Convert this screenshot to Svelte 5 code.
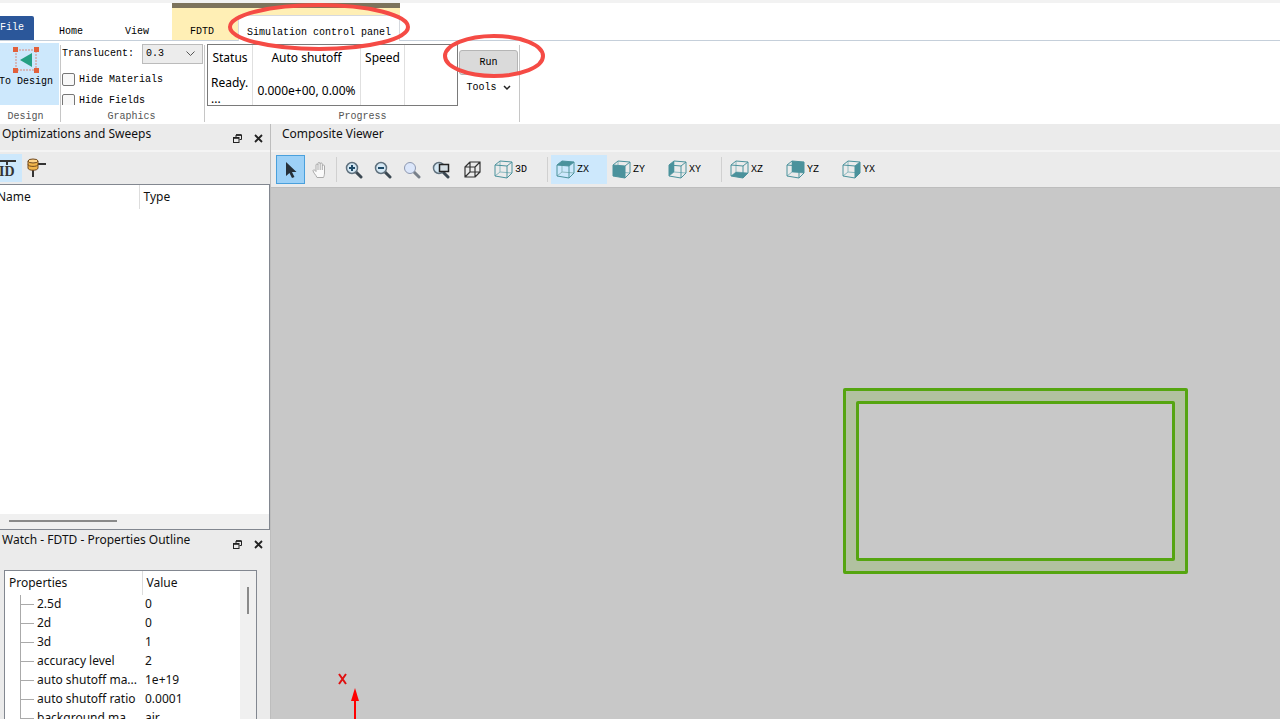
<script>

  let translucent = $state('0.3')
  let hide_materials = $state(false)
  let hide_fields = $state(false)
  let plane = $state('ZX')

  // corners: front face a b c d, back face e f g h
  const faces = {
    'ZX' : '1,5 13,6 18,2 6,1',
    'ZY' : '1,5 13,6 13,18 1,16',
    'XY' : '1,5 6,1 6,12 1,16',
    'XZ' : '1,16 6,12 18,13 13,18',
    'YZ' : '6,1 18,2 18,13 6,12',
    'YX' : '13,6 18,2 18,13 13,18'
  }

  const plane_groups = [ ['ZX','ZY','XY'], ['XZ','YZ','YX'] ]

  const properties = [
    ['2.5d','0'],
    ['2d','0'],
    ['3d','1'],
    ['accuracy level','2'],
    ['auto shutoff ma...','1e+19'],
    ['auto shutoff ratio','0.0001'],
    ['background ma...','air']
  ]
</script>

{#snippet cube(face)}
  <svg class="cube" width="19" height="19" viewBox="0 0 19 19">
    <path class="back" d="M1 16L6 12L18 13M6 12V1" />
    {#if face}
      <polygon points={faces[face]} />
    {/if}
    <path d="M1 5L13 6V18L1 16ZM1 5L6 1L18 2L13 6M18 2V13L13 18" />
  </svg>
{/snippet}

{#snippet lens()}
  <path d="M11 11L16 16" stroke="#3b4852" stroke-width="3" stroke-linecap="round" />
  <circle cx="7" cy="7" r="5.5" fill="#d5e8f4" stroke="#60717e" stroke-width="1.5" />
{/snippet}

{#snippet dock_buttons()}
  <div class="dock-buttons">
    <button aria-label="Float">
      <svg width="9" height="9" viewBox="0 0 9 9" fill="none" stroke="#222">
        <path d="M3 3V1H8.5V5.5H6.5" /><path d="M3 1H8.5" stroke-width="1.6" />
        <rect x=".5" y="3.5" width="5.5" height="5" /><path d="M.5 4H6" stroke-width="1.6" />
      </svg>
    </button>
    <button aria-label="Close">
      <svg width="9" height="9" viewBox="0 0 9 9" stroke="#222" stroke-width="1.8"><path d="M1 1L8 8M8 1L1 8" /></svg>
    </button>
  </div>
{/snippet}

<div class="app">
  <nav class="tabs">
    <button class="file">File</button>
    <button class="tab">Home</button>
    <button class="tab">View</button>
    <div class="context">
      <button class="tab fdtd">FDTD</button>
      <button class="tab active">Simulation control panel
        <svg class="mark tab-mark" viewBox="0 0 184 50"><ellipse cx="92" cy="25" rx="89" ry="22" /></svg>
      </button>
    </div>
  </nav>

  <div class="ribbon">
    <section class="group design">
      <div class="group-body">
        <button class="to-design">
          <svg width="26" height="26" viewBox="0 0 26 26">
            <rect x="3" y="3" width="20" height="20" fill="none" stroke="#d98a7c" stroke-dasharray="2 1" />
            <path fill="#e2603a" d="M0 0h5v5H0zM21 0h5v5h-5zM0 21h5v5H0zM21 21h5v5h-5z" />
            <path fill="#25a083" d="M7 13L19 6V20Z" />
          </svg>
          <span>To Design</span>
        </button>
      </div>
      <div class="caption">Design</div>
    </section>

    <section class="group graphics">
      <div class="group-body">
        <div class="line">
          <label for="translucent">Translucent:</label>
          <span class="combo">
            <select id="translucent" bind:value={translucent}>
              <option>0.3</option>
              <option>0.5</option>
            </select>
            <svg width="9" height="6" viewBox="0 0 9 6" fill="none" stroke="#555"><path d="M.5 .5L4.5 4.5L8.5 .5" /></svg>
          </span>
        </div>
        <label class="check"><input type="checkbox" bind:checked={hide_materials}>Hide Materials</label>
        <label class="check"><input type="checkbox" bind:checked={hide_fields}>Hide Fields</label>
      </div>
      <div class="caption">Graphics</div>
    </section>

    <section class="group progress">
      <div class="group-body">
        <div class="status">
          <table>
            <thead>
              <tr><th>Status</th><th>Auto shutoff</th><th>Speed</th><th></th></tr>
            </thead>
            <tbody>
              <tr><td class="ready">Ready.<br>...</td><td>0.000e+00, 0.00%</td><td></td><td></td></tr>
            </tbody>
          </table>
        </div>
        <div class="actions">
          <button class="run">Run
            <svg class="mark run-mark" viewBox="0 0 104 46"><ellipse cx="52" cy="23" rx="49" ry="20" /></svg>
          </button>
          <button class="tools">Tools
            <svg width="8" height="6" viewBox="0 0 8 6" fill="none" stroke="#222" stroke-width="1.5"><path d="M1 1L4 4L7 1" /></svg>
          </button>
        </div>
      </div>
      <div class="caption">Progress</div>
    </section>
  </div>

  <div class="workspace">
    <aside>
      <section class="sweeps">
        <header><h2>Optimizations and Sweeps</h2>{@render dock_buttons()}</header>
        <div class="mini-bar">
          <button class="id-button" aria-label="Identify">
            <svg width="20" height="20" viewBox="0 0 20 20"><path d="M0 3H17M8 3V7" stroke="#333" stroke-width="2" /><text x="0" y="18">ID</text></svg>
          </button>
          <button aria-label="Sweep">
            <svg width="20" height="20" viewBox="0 0 20 20">
              <path d="M10 6H19M6 11V19" stroke="#333" stroke-width="2" />
              <path d="M1 3v7c0 3 10 3 10 0V3z" fill="#f2b54b" stroke="#70481c" />
              <ellipse cx="6" cy="3" rx="5" ry="2" fill="#ffd487" stroke="#70481c" />
              <path d="M1 6.5c0 2.500 10 2.500 10 0" fill="none" stroke="#70481c" />
            </svg>
          </button>
        </div>
        <div class="tree">
          <table class="columns">
            <thead><tr><th class="name">Name</th><th>Type</th></tr></thead>
          </table>
          <div class="hscroll"><div></div></div>
        </div>
      </section>

      <section class="watch">
        <header><h2>Watch - FDTD - Properties Outline</h2>{@render dock_buttons()}</header>
        <div class="outline">
          <table class="columns">
            <thead><tr><th>Properties</th><th>Value</th></tr></thead>
            <tbody>
              {#each properties as [name, value]}
                <tr><td>{name}</td><td>{value}</td></tr>
              {/each}
            </tbody>
          </table>
          <div class="vscroll"><div></div></div>
        </div>
      </section>
    </aside>

    <main>
      <header><h2>Composite Viewer</h2></header>
      <div class="toolbar">
        <button class="icon picked" aria-label="Select">
          <svg width="14" height="18" viewBox="0 0 14 18"><path d="M2 1V15L5.500 12L8 17L10.500 16L8 11H12.500Z" fill="#26313a" /></svg>
        </button>
        <button class="icon" aria-label="Pan">
          <svg width="16" height="18" viewBox="0 0 16 18">
            <path d="M5 16.500C4 14 1 11.500 1 9.500C1.500 8.300 3 9 4 10.500V4C4 2.700 6 2.700 6 4V2.500C6 1 8 1 8 2.500V3C8 1.500 10.300 1.500 10.300 3V5C10.300 3.700 12.500 3.700 12.500 5V12C12.500 14 12 15 11.500 16.500Z" fill="#fafafa" stroke="#aaa" />
            <path d="M6 4V9M8.200 3V9M10.300 5V9" stroke="#aaa" />
          </svg>
        </button>
        <i class="sep"></i>
        <button class="icon" aria-label="Zoom in">
          <svg width="18" height="18" viewBox="0 0 18 18">{@render lens()}<path d="M4 7H10M7 4V10" stroke="#1e4a68" stroke-width="2" /></svg>
        </button>
        <button class="icon" aria-label="Zoom out">
          <svg width="18" height="18" viewBox="0 0 18 18">{@render lens()}<path d="M4 7H10" stroke="#1e4a68" stroke-width="2" /></svg>
        </button>
        <button class="icon" aria-label="Zoom">
          <svg width="18" height="18" viewBox="0 0 18 18">
            <path d="M11 11L16 16" stroke="#78808a" stroke-width="3" stroke-linecap="round" />
            <circle cx="7" cy="7" r="5.500" fill="#dbe6fa" stroke="#8d98b0" />
          </svg>
        </button>
        <button class="icon" aria-label="Zoom extent">
          <svg width="18" height="18" viewBox="0 0 18 18">{@render lens()}<rect x="7.500" y="3.500" width="9" height="7" fill="#d3dde3" stroke="#222" stroke-width="1.500" /></svg>
        </button>
        <button class="icon wide" aria-label="Perspective">
          <svg width="17" height="17" viewBox="0 0 17 17" fill="none" stroke="#333" stroke-width="1.200">
            <path d="M1 6H11V16H1ZM6 1H16V11H6ZM1 6L6 1M11 6L16 1M11 16L16 11M1 16L6 11" />
          </svg>
        </button>
        <button class="view">{@render cube('')}3D</button>
        {#each plane_groups as group}
          <i class="sep"></i>
          {#each group as name}
            <button class="view" class:current={plane === name} onclick={() => plane = name}>{@render cube(name)}{name}</button>
          {/each}
        {/each}
      </div>
      <div class="canvas">
        <div class="region"><div></div></div>
        <div class="axis">
          <svg width="24" height="50" viewBox="0 0 24 50">
            <path d="M2 5L9 15M9 5L2 15" stroke="#e01010" stroke-width="2" />
            <path d="M18 28V50" stroke="#f00" stroke-width="2" />
            <path d="M18 19L22 32H14Z" fill="#f00" />
          </svg>
        </div>
      </div>
    </main>
  </div>
</div>

<style>

  :global(body) {
    margin: 0;
    overflow: hidden;
  }

  .app {
    display: flex;
    flex-direction: column;
    height: 100vh;
    overflow: hidden;
    box-sizing: border-box;
    border-top: 3px solid #f2f2f2;
    background: #fff;
    color: #111;
    font: 12px/16px "Noto Sans", sans-serif;
  }

  button, select {
    font: inherit;
    color: inherit;
    border: none;
    background: none;
    padding: 0;
  }

  button {
    display: flex;
    align-items: center;
    justify-content: center;
  }

  svg {
    display: block;
    flex: none;
  }

  .tabs, .ribbon, .toolbar {
    color: #000;
    font: 10px/12px "Liberation Mono", monospace;
  }

  .tabs {
    display: flex;
    align-items: flex-end;
    height: 37px;
    border-bottom: 1px solid #c5cfda;
  }

  .file {
    width: 34px;
    height: 24px;
    padding-right: 10px;
    box-sizing: border-box;
    background: #2b579a;
    color: #fff;
    border-radius: 0 2px 0 0;
  }

  .tab {
    width: 66px;
    height: 16px;
    margin-left: 4px;
  }

  .tab + .tab {
    margin-left: 0;
  }

  .context {
    display: flex;
    align-items: flex-end;
    box-sizing: border-box;
    height: 37px;
    margin-left: 2px;
    border-top: 5px solid #7d735c;
    background: #ffefb5;
  }

  .context .fdtd {
    width: 60px;
    margin-left: 0;
    margin-right: 6px;
  }

  .context .active {
    position: relative;
    width: 162px;
    height: 26px;
    margin-bottom: -1px;
    padding-top: 8px;
    box-sizing: border-box;
    background: #fff;
    border: 1px solid #d6d9de;
    border-bottom: none;
  }

  .mark {
    position: absolute;
    z-index: 2;
    pointer-events: none;
    fill: none;
    stroke: #f54b45;
    stroke-width: 4;
  }

  .tab-mark {
    width: 184px;
    left: -12px;
    top: -14px;
  }

  .run-mark {
    width: 104px;
    left: -18px;
    top: -18px;
  }

  .ribbon {
    display: flex;
    height: 83px;
    background: #fff;
  }

  .group {
    display: flex;
    flex-direction: column;
    box-sizing: border-box;
    position: relative;
  }

  .group::after {
    content: '';
    position: absolute;
    right: 0;
    top: 4px;
    bottom: 2px;
    width: 1px;
    background: #c6c6c6;
  }

  .group-body {
    height: 64px;
    overflow: hidden;
  }

  .caption {
    padding-top: 6px;
    text-align: center;
    color: #555;
  }

  .design {
    width: 61px;
  }

  .design .caption {
    padding-right: 10px;
  }

  .to-design {
    flex-direction: column;
    justify-content: flex-start;
    gap: 3px;
    width: 66px;
    height: 62px;
    margin: 2px 0 0 -7px;
    padding-top: 4px;
    background: #cde8fc;
  }

  .to-design span {
    white-space: nowrap;
  }

  .graphics {
    width: 144px;
    padding-left: 1px;
  }

  .graphics .caption {
    padding-right: 4px;
  }

  .line {
    display: flex;
    align-items: center;
    justify-content: space-between;
    height: 20px;
    margin: 3px 2px 5px 0;
  }

  .combo {
    position: relative;
  }

  .combo select {
    appearance: none;
    display: block;
    width: 61px;
    height: 20px;
    padding-left: 3px;
    border: 1px solid #bbb;
    background: #ececec;
  }

  .combo svg {
    position: absolute;
    right: 8px;
    top: 7px;
    pointer-events: none;
  }

  .check {
    display: flex;
    align-items: center;
    gap: 4px;
    height: 21px;
  }

  .check input {
    appearance: none;
    width: 13px;
    height: 13px;
    margin: 0;
    border: 1px solid #767676;
    border-radius: 2px;
    background: #f8f8f8;
  }

  .check input:checked {
    background: #2b579a;
  }

  .progress {
    width: 315px;
  }

  .progress .group-body {
    display: flex;
    overflow: visible;
  }

  .status {
    box-sizing: border-box;
    width: 251px;
    height: 62px;
    margin: 3px 1px 0 2px;
    border: 1px solid #7a7a7a;
    overflow: hidden;
  }

  .status table {
    border-collapse: collapse;
    table-layout: fixed;
    width: 100%;
    font: 12px/16px "Noto Sans", sans-serif;
  }

  .status th, .status td {
    padding: 0;
    border-right: 1px solid #e0e0e0;
    font-weight: normal;
    white-space: nowrap;
    text-align: center;
  }

  .status th {
    height: 26px;
  }

  .status th:nth-child(1) {
    width: 44px;
  }

  .status th:nth-child(2) {
    width: 107px;
  }

  .status th:nth-child(3) {
    width: 43px;
  }

  .status th:last-child, .status td:last-child {
    border-right: none;
  }

  .status td {
    height: 40px;
  }

  .status td.ready {
    padding-left: 3px;
    text-align: left;
  }

  .actions {
    display: flex;
    flex-direction: column;
    gap: 7px;
    padding-top: 9px;
  }

  .run {
    position: relative;
    width: 59px;
    height: 25px;
    border: 1px solid #b5b5b5;
    border-radius: 3px;
    background: #dadada;
  }

  .tools {
    gap: 6px;
  }

  .workspace {
    display: flex;
    flex: 1;
    min-height: 0;
    background: #ebebeb;
  }

  header {
    display: flex;
    justify-content: space-between;
    box-sizing: border-box;
    height: 26px;
    padding: 2px 7px 0 2px;
  }

  h2 {
    margin: 0;
    font-size: 12px;
    font-weight: normal;
  }

  .dock-buttons {
    display: flex;
    align-items: center;
    gap: 12px;
  }

  aside {
    display: flex;
    flex-direction: column;
    width: 270px;
    flex: none;
    border-right: 1px solid #bdbdbd;
  }

  .sweeps {
    display: flex;
    flex-direction: column;
    flex: 15 1 0;
    min-height: 0;
  }

  .mini-bar {
    display: flex;
    gap: 5px;
    height: 28px;
    padding: 2px 0;
    border-top: 2px solid #f4f4f4;
  }

  .id-button {
    width: 22px;
    padding-right: 4px;
    background: #cde8fc;
  }

  .id-button text {
    font: bold 14px "Liberation Serif", serif;
    fill: #333;
  }

  .tree {
    display: flex;
    flex-direction: column;
    justify-content: space-between;
    flex: 1;
    border: 1px solid #828790;
    border-left: none;
    background: #fff;
  }

  .columns {
    border-collapse: collapse;
    table-layout: fixed;
    width: 100%;
  }

  .columns th {
    box-sizing: border-box;
    height: 24px;
    padding: 0 4px;
    font-weight: normal;
    text-align: left;
  }

  .columns th:first-child {
    width: 137px;
    border-right: 1px solid #ddd;
  }

  .columns th.name {
    width: 139px;
    padding: 0;
    text-indent: -3px;
  }

  .hscroll {
    height: 15px;
    background: #f0f0f0;
  }

  .hscroll div {
    width: 40%;
    height: 2px;
    margin-left: 9px;
    position: relative;
    top: 6px;
    background: #8a8a8a;
  }

  .watch {
    display: flex;
    flex-direction: column;
    flex: 7 1 0;
    min-height: 0;
    overflow: hidden;
  }

  .watch header {
    height: 28px;
  }

  .outline {
    display: flex;
    flex: 1;
    min-height: 0;
    margin: 12px 13px 0 4px;
    border: 1px solid #828790;
    border-bottom: none;
    background: #fff;
  }

  .outline .columns td {
    height: 19px;
    padding: 0 3px;
    white-space: nowrap;
  }

  /* branch line and the stub that leads to each property */
  .outline .columns td:first-child {
    padding: 0 0 0 32px;
    background:
      linear-gradient(#aaa, #aaa) 15px 0 / 1px 100% no-repeat,
      linear-gradient(#aaa, #aaa) 15px 9px / 14px 1px no-repeat;
  }

  .vscroll {
    flex: none;
    width: 16px;
    background: #f0f0f0;
  }

  .vscroll div {
    width: 2px;
    height: 27px;
    margin: 16px auto 0;
    background: #8a8a8a;
  }

  main {
    display: flex;
    flex-direction: column;
    flex: 1;
    min-width: 0;
  }

  main header {
    padding-left: 11px;
  }

  .toolbar {
    display: flex;
    align-items: center;
    height: 35px;
    padding-left: 5px;
    border-top: 2px solid #f4f4f4;
    border-bottom: 1px solid #bdbdbd;
  }

  .icon {
    box-sizing: border-box;
    width: 29px;
    height: 29px;
  }

  .icon.picked {
    border: 1px solid #4aa0dc;
    background: #9dd1f7;
  }

  .icon.wide {
    width: 34px;
  }

  .view {
    justify-content: flex-start;
    gap: 2px;
    width: 56px;
    height: 29px;
    padding-left: 5px;
    box-sizing: border-box;
  }

  .view.current {
    background: #cde8fc;
  }

  .sep {
    width: 1px;
    height: 25px;
    margin: 0 2px;
    background: #d0d0d0;
  }

  .view + .sep {
    margin-right: 3px;
  }

  .cube path {
    fill: none;
    stroke: #4b929c;
  }

  .cube .back {
    stroke: #8bb9bf;
  }

  .cube polygon {
    fill: #4b929c;
  }

  .canvas {
    position: relative;
    flex: 1;
    overflow: hidden;
    background: #c8c8c8;
  }

  .region {
    position: absolute;
    top: 200px;
    right: 92px;
    padding: 10px;
    border: 3px solid #55a510;
    border-radius: 2px;
    background: #b1c1a0;
  }

  .region div {
    width: 313px;
    height: 154px;
    border: 3px solid #55a510;
    border-radius: 2px;
    background: #c8c8c8;
  }

  .axis {
    position: absolute;
    left: 66px;
    bottom: 0;
  }
</style>
